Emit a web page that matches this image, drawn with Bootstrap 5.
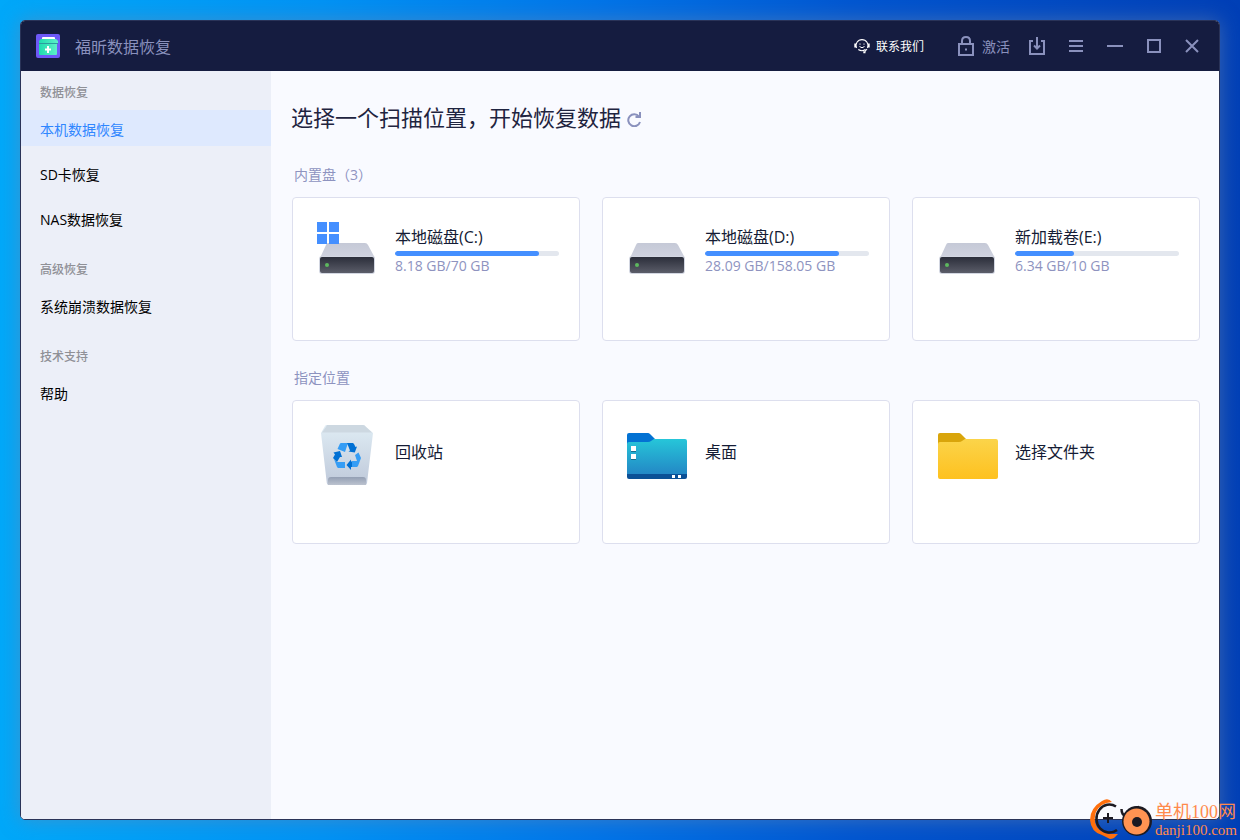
<!DOCTYPE html>
<html lang="zh-CN">
<head>
<meta charset="utf-8">
<meta name="viewport" content="width=device-width, initial-scale=1">
<title>福昕数据恢复</title>
<link href="https://cdn.jsdelivr.net/npm/bootstrap@5.3.0/dist/css/bootstrap.min.css" rel="stylesheet">
<style>
  body {
    font-family: "Open Sans", "Noto Sans CJK SC", sans-serif;
    font-size: 14px;
    line-height: 20px;
    background: linear-gradient(90deg, #00a8f9 0%, #0092f4 26%, #0074e8 48%, #0054cf 70%, #003fb6 100%);
  }
  .app-window {
    margin: 20px;
    border: 1px solid #2a3358;
    border-radius: 5px;
    background: #f9faff;
    box-shadow: 0 0 20px rgba(110, 135, 170, .55);
  }
  .title-bar { height: 50px; padding: 0 20px 0 15px; background: #151c40; color: #8a91bd; }
  .app-name { font-size: 16px; line-height: 24px; margin-left: 15px; padding-top: 2px; }
  .bar-actions { gap: 24px; }
  .bar-btn { color: #8a91bd; background: none; border: 0; padding: 0; }
  .activate-btn { gap: 8px; margin: 0 -5px 0 10px; }
  .activate-btn span { padding-top: 2px; }
  .contact-link { color: #fff; font-size: 12px; gap: 6px; }
  .contact-link span { padding-top: 2px; }
  .side-nav { width: 250px; background: #eceff8; }
  .side-head { font-size: 12px; height: 39px; line-height: 20px; padding: 12px 19px 7px; color: #8f9096; margin: 0; }
  .side-list + .side-head { margin-top: 12px; }
  .side-list { gap: 9px; }
  .side-link { height: 36px; padding: 10px 19px 6px; color: #000; text-decoration: none; }
  .side-link.active { background: #dee9fe; color: #2f86ff; }
  .content { padding: 31px 19px 20px 21px; }
  .page-head { gap: 6px; margin: 0 -1px 33px; }
  .page-title { font-size: 22px; line-height: 30px; color: #1f2440; font-weight: 400; margin: 0; }
  .section-head { font-size: 14px; line-height: 20px; color: #8e93bf; font-weight: 400; padding-left: 2px; margin: 0 0 12px; }
  .tile-row + .section-head { margin-top: 27px; }
  .tile-row { --bs-gutter-x: 22px; }
  .tile {
    height: 144px; padding: 24px 20px 0 24px; gap: 16px;
    border: 1px solid #dddfee; border-radius: 4px; background: #fff; color: #151c35;
  }
  .tile-body { padding-top: 3px; }
  .tile-body .tile-name { margin-bottom: 2px; }
  .tile-place { height: 54px; }
  .tile-name { font-size: 16px; line-height: 24px; }
  .usage { height: 5px; border-radius: 3px; background: #e3e7ee; }
  .usage .progress-bar { background: #448fff; border-radius: 3px; }
  .usage-text { color: #8e93bf; }
  .watermark { right: 3px; bottom: 0; gap: 1px; color: #ff8a4c; font-family: "Liberation Serif", "Noto Sans CJK SC", serif; }
  .mark-text { padding-bottom: 2px; }
  .mark-top { font-size: 18px; line-height: 20px; }
  .mark-url { font-size: 15px; line-height: 16px; }
</style>
</head>
<body class="d-flex flex-column min-vh-100 position-relative">

<svg width="0" height="0" class="position-absolute" aria-hidden="true">
  <defs>
    <linearGradient id="driveTop" x2="0" y2="1"><stop stop-color="#c5c9d7"/><stop offset="1" stop-color="#d0d3df"/></linearGradient>
    <linearGradient id="driveFront" x2="0" y2="1"><stop stop-color="#2b2e3a"/><stop offset="1" stop-color="#5b5d69"/></linearGradient>
    <linearGradient id="binBody" x2="0" y2="1"><stop stop-color="#dfecf4"/><stop offset="1" stop-color="#bfc9da"/></linearGradient>
    <linearGradient id="binBase" x2="0" y2="1"><stop stop-color="#939fb3"/><stop offset="1" stop-color="#bcc3cf"/></linearGradient>
    <linearGradient id="deskBody" x2="0" y2="1"><stop stop-color="#26c6d9"/><stop offset="1" stop-color="#2386c5"/></linearGradient>
    <linearGradient id="foldBody" x2="0" y2="1"><stop stop-color="#fbd44a"/><stop offset="1" stop-color="#fec11f"/></linearGradient>
    <linearGradient id="logoBox" x2="1"><stop stop-color="#1fdcae"/><stop offset="1" stop-color="#5df0c8"/></linearGradient>
    <symbol id="drive" viewBox="0 0 62 60">
      <path d="M11 21h37q2 0 3 2l7 13H3l6-13q.7-2 2-2z" fill="url(#driveTop)"/>
      <rect x="2" y="34" width="56" height="18" rx="3" fill="#d3d7e2"/>
      <rect x="3" y="35" width="54" height="16" rx="2" fill="url(#driveFront)"/>
      <circle cx="10" cy="43" r="2" fill="#5db85e"/>
    </symbol>
  </defs>
</svg>

<div class="app-window d-flex flex-column flex-grow-1 overflow-hidden">
  <header class="title-bar d-flex align-items-center flex-shrink-0">
    <svg width="24" height="24" viewBox="0 0 24 24" aria-hidden="true">
      <rect width="24" height="24" rx="2" fill="#6d59f7"/>
      <rect x="6" y="3" width="13" height="3" rx="1" fill="#fff"/>
      <path d="M5 5h15l2 2v2H3V7z" fill="url(#logoBox)"/>
      <path d="M3 10h18v10q0 1-1 1H4q-1 0-1-1z" fill="url(#logoBox)"/>
      <path d="M3 9.500h19" stroke="#2d9b9f"/>
      <path d="M12 12v7M9 15.500h6" stroke="#fff" stroke-width="2"/>
    </svg>
    <span class="app-name">福昕数据恢复</span>
    <div class="bar-actions d-flex align-items-center ms-auto">
      <a href="#" class="contact-link d-flex align-items-center text-decoration-none">
        <svg width="16" height="16" viewBox="0 0 16 16" fill="none" stroke="#fff" aria-hidden="true">
          <path d="M2.500 10A6 6 0 0 1 8 1.600 6 6 0 0 1 13.500 10M13 11l-2 2.500M4.300 11.500Q8 14 11.500 11.500" stroke-width="1.100"/>
          <path d="M1.200 5.500v4M14.800 5.500v4" stroke-width="1.800"/>
          <path d="M5.500 8.500q2.500 2.500 5 0M6 5.500v1.200M10 5.500v1.200"/><path d="M9.300 14.300h2.200" stroke-width="2"/>
        </svg><span>联系我们</span>
      </a>
      <button class="bar-btn activate-btn d-flex align-items-center">
        <svg width="16" height="20" viewBox="0 0 16 20" fill="none" stroke="currentColor" stroke-width="2" aria-hidden="true"><path d="M1 8h14v11H1zM4 8V5q0-4 4-4t4 4v3"/><path d="M8 12.500v2"/></svg><span>激活</span>
      </button>
      <button class="bar-btn d-flex" aria-label="下载">
        <svg width="16" height="18" viewBox="0 0 16 18" fill="none" stroke="currentColor" stroke-width="2"><path d="M4 4H1v13h14V4h-3M8 0v11M5 8.500l3 3 3-3"/></svg>
      </button>
      <button class="bar-btn d-flex" aria-label="菜单">
        <svg width="14" height="14" viewBox="0 0 14 14" stroke="currentColor" stroke-width="2"><path d="M0 2h14M0 7h14M0 12h14"/></svg>
      </button>
      <button class="bar-btn d-flex" aria-label="最小化">
        <svg width="16" height="14" viewBox="0 0 16 14" stroke="currentColor" stroke-width="2"><path d="M0 7h16"/></svg>
      </button>
      <button class="bar-btn d-flex" aria-label="最大化">
        <svg width="14" height="14" viewBox="0 0 14 14" fill="none" stroke="currentColor" stroke-width="2"><path d="M1 1h12v12H1z"/></svg>
      </button>
      <button class="bar-btn d-flex" aria-label="关闭">
        <svg width="14" height="14" viewBox="0 0 14 14" stroke="currentColor" stroke-width="2"><path d="M1 1l12 12M13 1L1 13"/></svg>
      </button>
    </div>
  </header>

  <div class="d-flex flex-grow-1">
    <nav class="side-nav flex-shrink-0">
      <h2 class="side-head">数据恢复</h2>
      <div class="side-list d-flex flex-column">
        <a href="#" class="side-link active" aria-current="page">本机数据恢复</a>
        <a href="#" class="side-link">SD卡恢复</a>
        <a href="#" class="side-link">NAS数据恢复</a>
      </div>
      <h2 class="side-head">高级恢复</h2>
      <div class="side-list d-flex flex-column"><a href="#" class="side-link">系统崩溃数据恢复</a></div>
      <h2 class="side-head">技术支持</h2>
      <div class="side-list d-flex flex-column"><a href="#" class="side-link">帮助</a></div>
    </nav>

    <main class="content flex-grow-1">
      <div class="page-head d-flex align-items-center">
        <h1 class="page-title">选择一个扫描位置，开始恢复数据</h1>
        <button class="bar-btn d-flex pt-1" aria-label="刷新">
          <svg width="14" height="15" viewBox="0 0 14 15" fill="none" stroke="currentColor" stroke-width="2"><path d="M12 4.500A6 6 0 1 0 13 10"/><path d="M13 0v5H8.500"/></svg>
        </button>
      </div>

      <h2 class="section-head">内置盘（3）</h2>
      <div class="row tile-row row-cols-3">
        <div class="col"><button class="tile d-flex w-100 text-start">
          <svg width="62" height="60" class="flex-shrink-0" aria-hidden="true"><use href="#drive" width="62" height="60"/><path d="M0 0h10v10H0zM12 0h10v10H12zM0 12h10v10H0zM12 12h10v10H12z" fill="#448fff"/></svg>
          <span class="tile-body d-flex flex-column flex-grow-1">
            <span class="tile-name">本地磁盘(C:)</span>
            <span class="progress usage" role="progressbar" aria-label="C:" aria-valuenow="88"><span class="progress-bar" style="width:88%"></span></span>
            <span class="usage-text">8.18 GB/70 GB</span>
          </span>
        </button></div>
        <div class="col"><button class="tile d-flex w-100 text-start">
          <svg width="62" height="60" class="flex-shrink-0" aria-hidden="true"><use href="#drive" width="62" height="60"/></svg>
          <span class="tile-body d-flex flex-column flex-grow-1">
            <span class="tile-name">本地磁盘(D:)</span>
            <span class="progress usage" role="progressbar" aria-label="D:" aria-valuenow="82"><span class="progress-bar" style="width:82%"></span></span>
            <span class="usage-text">28.09 GB/158.05 GB</span>
          </span>
        </button></div>
        <div class="col"><button class="tile d-flex w-100 text-start">
          <svg width="62" height="60" class="flex-shrink-0" aria-hidden="true"><use href="#drive" width="62" height="60"/></svg>
          <span class="tile-body d-flex flex-column flex-grow-1">
            <span class="tile-name">新加载卷(E:)</span>
            <span class="progress usage" role="progressbar" aria-label="E:" aria-valuenow="36"><span class="progress-bar" style="width:36%"></span></span>
            <span class="usage-text">6.34 GB/10 GB</span>
          </span>
        </button></div>
      </div>

      <h2 class="section-head">指定位置</h2>
      <div class="row tile-row row-cols-3">
        <div class="col"><button class="tile d-flex w-100 text-start">
          <svg width="62" height="60" viewBox="0 0 62 60" class="flex-shrink-0" aria-hidden="true">
            <path d="M9 0h37q1.500 0 2.500 1.500L56 8l-6 50q-.3 2-2 2H12q-2 0-2.200-2L4 8l4-7z" fill="url(#binBody)"/>
            <path d="M10 0h36q2 0 3 2l6 5.500H5L9 2z" fill="#cdd8e1"/>
            <path d="M14 52h32q3 0 3 3v5H11v-5q0-3 3-3z" fill="url(#binBase)"/>
            <path d="M23 18.500l1-.5h7l-3 9-7.500-3zM38 30l3.500-2.500L44 33l-3 8-1 1h-5v-6h5zM17 34l3 3h8v6h-7l-1-1z" fill="#359df5"/>
            <path d="M30 18h6l1 1 1.500 3 1.500-.5-2.200 6-6.300-1 1.500-1zM34 34.500v2h1V42h-1v3l-4.500-5zM16.500 27.500L23 26l2 6h-2l-3 5-4-4 2-3.500z" fill="#0070d4"/>
          </svg>
          <span class="tile-place d-flex align-items-center tile-name">回收站</span>
        </button></div>
        <div class="col"><button class="tile d-flex w-100 text-start">
          <svg width="62" height="60" viewBox="0 0 62 60" class="flex-shrink-0" aria-hidden="true">
            <path d="M2 8h19q1 0 2 1l5 5-6 6H0V10q0-2 2-2z" fill="#0372d3"/>
            <path d="M27 14h31q2 0 2 2v34H0V19q0-2 2-2h19q2 0 3-1z" fill="url(#deskBody)"/>
            <path d="M0 49h60v3q0 2-2 2H2q-2 0-2-2z" fill="#0b5096"/>
            <path d="M4 25h5v2H4zM4 33h5v2H4z" fill="#176e8d"/>
            <path d="M4 21h5v5H4zM4 29h5v5H4zM45 50h3v3h-3zM51 50h3v3h-3z" fill="#fff"/>
          </svg>
          <span class="tile-place d-flex align-items-center tile-name">桌面</span>
        </button></div>
        <div class="col"><button class="tile d-flex w-100 text-start">
          <svg width="62" height="60" viewBox="0 0 62 60" class="flex-shrink-0" aria-hidden="true">
            <path d="M3 8h19q1 0 2 1l5 5-6 6H1V10q0-2 2-2z" fill="#d9a50b"/>
            <path d="M28 14h31q2 0 2 2v36q0 2-2 2H3q-2 0-2-2V19q0-2 2-2h19q2 0 3-1z" fill="url(#foldBody)"/>
          </svg>
          <span class="tile-place d-flex align-items-center tile-name">选择文件夹</span>
        </button></div>
      </div>
    </main>
  </div>
</div>

<div class="watermark position-absolute d-flex align-items-end">
  <svg width="64" height="42" viewBox="0 0 64 42" fill="none" aria-hidden="true">
    <path d="M22 4Q18-1 12 3 0 10 0 22q1 12 12 15l8 4q4 0 6-3l2-2Q12 37 7 29 3 22 6 14 10 5 22 4z" fill="#ff6f0d"/>
    <path d="M26 8.500A13 14 0 1 0 27 32M31.500 11q0 6 4.500 7 4-8 13-9" stroke="#1c1a22" stroke-width="2.500"/>
    <path d="M18 15v10M13 20h10" stroke="#1c1a22" stroke-width="2"/>
    <circle cx="47" cy="23" r="15" fill="#1c1a22"/><circle cx="46.500" cy="23.500" r="13" fill="#ff9352"/><circle cx="47" cy="24" r="5" fill="#1c1a22"/>
  </svg>
  <div class="mark-text">
    <div class="mark-top">单机100网</div>
    <div class="mark-url">danji100.com</div>
  </div>
</div>

<script src="https://cdn.jsdelivr.net/npm/bootstrap@5.3.0/dist/js/bootstrap.bundle.min.js"></script>
</body>
</html>
